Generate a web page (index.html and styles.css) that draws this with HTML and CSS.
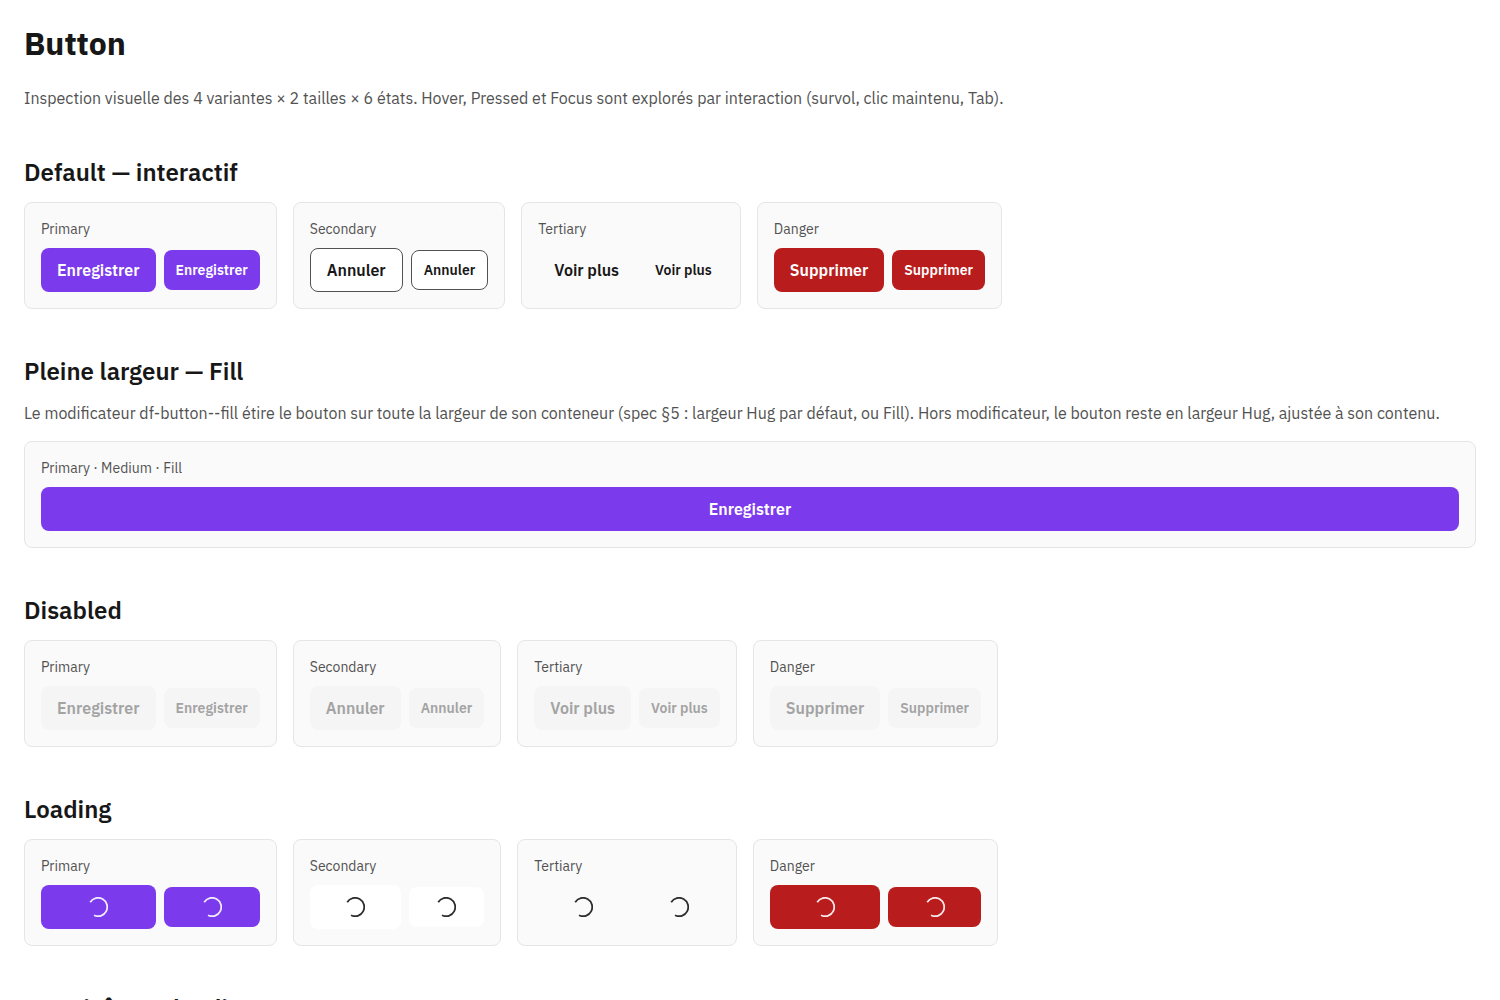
FILE: index.html
```html
<!DOCTYPE html>
<html lang="fr">
<head>
    <meta charset="UTF-8">
    <meta name="viewport" content="width=device-width, initial-scale=1.0">
    <title>Button</title>
    <link rel="stylesheet" href="styles.css">
</head>
<body>
    <!-- Spinner partagé par tous les boutons en chargement -->
    <svg class="sprite" aria-hidden="true">
        <symbol id="spinner" viewBox="0 0 20 20">
            <path d="M2.2 5.2A9.2 9.2 0 1 1 6 18.3" fill="none" stroke="currentColor" stroke-width="1.8"/>
        </symbol>
    </svg>

    <main class="page">
        <header class="intro">
            <h1>Button</h1>
            <p>Inspection visuelle des 4 variantes × 2 tailles × 6 états. Hover, Pressed et Focus sont explorés par interaction (survol, clic maintenu, Tab).</p>
        </header>

        <section class="section">
            <h2>Default — interactif</h2>
            <div class="row">
                <div class="card">
                    <span class="label">Primary</span>
                    <div class="buttons">
                        <button type="button" class="df-button df-button--primary">Enregistrer</button>
                        <button type="button" class="df-button df-button--primary df-button--small">Enregistrer</button>
                    </div>
                </div>
                <div class="card">
                    <span class="label">Secondary</span>
                    <div class="buttons">
                        <button type="button" class="df-button df-button--secondary">Annuler</button>
                        <button type="button" class="df-button df-button--secondary df-button--small">Annuler</button>
                    </div>
                </div>
                <div class="card">
                    <span class="label">Tertiary</span>
                    <div class="buttons">
                        <button type="button" class="df-button df-button--tertiary">Voir plus</button>
                        <button type="button" class="df-button df-button--tertiary df-button--small">Voir plus</button>
                    </div>
                </div>
                <div class="card">
                    <span class="label">Danger</span>
                    <div class="buttons">
                        <button type="button" class="df-button df-button--danger">Supprimer</button>
                        <button type="button" class="df-button df-button--danger df-button--small">Supprimer</button>
                    </div>
                </div>
            </div>
        </section>

        <section class="section">
            <h2>Pleine largeur — Fill</h2>
            <p>Le modificateur df-button--fill étire le bouton sur toute la largeur de son conteneur (spec §5 : largeur Hug par défaut, ou Fill). Hors modificateur, le bouton reste en largeur Hug, ajustée à son contenu.</p>
            <div class="card">
                <span class="label">Primary · Medium · Fill</span>
                <button type="button" class="df-button df-button--primary df-button--fill">Enregistrer</button>
            </div>
        </section>

        <section class="section">
            <h2>Disabled</h2>
            <div class="row">
                <div class="card">
                    <span class="label">Primary</span>
                    <div class="buttons">
                        <button type="button" class="df-button df-button--primary" disabled>Enregistrer</button>
                        <button type="button" class="df-button df-button--primary df-button--small" disabled>Enregistrer</button>
                    </div>
                </div>
                <div class="card">
                    <span class="label">Secondary</span>
                    <div class="buttons">
                        <button type="button" class="df-button df-button--secondary" disabled>Annuler</button>
                        <button type="button" class="df-button df-button--secondary df-button--small" disabled>Annuler</button>
                    </div>
                </div>
                <div class="card">
                    <span class="label">Tertiary</span>
                    <div class="buttons">
                        <button type="button" class="df-button df-button--tertiary" disabled>Voir plus</button>
                        <button type="button" class="df-button df-button--tertiary df-button--small" disabled>Voir plus</button>
                    </div>
                </div>
                <div class="card">
                    <span class="label">Danger</span>
                    <div class="buttons">
                        <button type="button" class="df-button df-button--danger" disabled>Supprimer</button>
                        <button type="button" class="df-button df-button--danger df-button--small" disabled>Supprimer</button>
                    </div>
                </div>
            </div>
        </section>

        <section class="section">
            <h2>Loading</h2>
            <div class="row">
                <div class="card">
                    <span class="label">Primary</span>
                    <div class="buttons">
                        <button type="button" class="df-button df-button--primary df-button--loading" aria-busy="true" aria-label="Enregistrer"><span class="text">Enregistrer</span><svg class="spinner"><use href="#spinner"/></svg></button>
                        <button type="button" class="df-button df-button--primary df-button--small df-button--loading" aria-busy="true" aria-label="Enregistrer"><span class="text">Enregistrer</span><svg class="spinner"><use href="#spinner"/></svg></button>
                    </div>
                </div>
                <div class="card">
                    <span class="label">Secondary</span>
                    <div class="buttons">
                        <button type="button" class="df-button df-button--secondary df-button--loading" aria-busy="true" aria-label="Annuler"><span class="text">Annuler</span><svg class="spinner"><use href="#spinner"/></svg></button>
                        <button type="button" class="df-button df-button--secondary df-button--small df-button--loading" aria-busy="true" aria-label="Annuler"><span class="text">Annuler</span><svg class="spinner"><use href="#spinner"/></svg></button>
                    </div>
                </div>
                <div class="card">
                    <span class="label">Tertiary</span>
                    <div class="buttons">
                        <button type="button" class="df-button df-button--tertiary df-button--loading" aria-busy="true" aria-label="Voir plus"><span class="text">Voir plus</span><svg class="spinner"><use href="#spinner"/></svg></button>
                        <button type="button" class="df-button df-button--tertiary df-button--small df-button--loading" aria-busy="true" aria-label="Voir plus"><span class="text">Voir plus</span><svg class="spinner"><use href="#spinner"/></svg></button>
                    </div>
                </div>
                <div class="card">
                    <span class="label">Danger</span>
                    <div class="buttons">
                        <button type="button" class="df-button df-button--danger df-button--loading" aria-busy="true" aria-label="Supprimer"><span class="text">Supprimer</span><svg class="spinner"><use href="#spinner"/></svg></button>
                        <button type="button" class="df-button df-button--danger df-button--small df-button--loading" aria-busy="true" aria-label="Supprimer"><span class="text">Supprimer</span><svg class="spinner"><use href="#spinner"/></svg></button>
                    </div>
                </div>
            </div>
        </section>

        <section class="section">
            <h2>Avec icône — leading</h2>
        </section>
    </main>
</body>
</html>
```
FILE: styles.css
```css
* {
    box-sizing: border-box;
}
body {
    margin: 0;
    background: #fff;
    color: #171717;
    font-family: 'IBM Plex Sans', Roboto, sans-serif;
    font-size: 16px;
    line-height: 24px;
}
h1, h2, p {
    margin: 0;
}
h1 {
    font-size: 32px;
    font-weight: 700;
    line-height: 38px;
}
h2 {
    font-size: 24px;
    font-weight: 600;
    line-height: 28px;
}
p {
    color: #525252;
}
.sprite {
    display: none;
}
.page {
    display: flex;
    flex-direction: column;
    gap: 48px;
    padding: 24px;
}
.intro {
    display: flex;
    flex-direction: column;
    gap: 24px;
}
.section {
    display: flex;
    flex-direction: column;
    gap: 16px;
}
.row {
    display: flex;
    flex-wrap: wrap;
    gap: 16px;
}
.card {
    display: flex;
    flex-direction: column;
    gap: 8px;
    padding: 16px;
    border: 1px solid #e5e5e5;
    border-radius: 8px;
    background: #fafafa;
}
.label {
    color: #525252;
    font-size: 14px;
    line-height: 21px;
}
.buttons {
    display: flex;
    align-items: center;
    gap: 8px;
}

/* Bouton */
.df-button {
    position: relative;
    display: inline-flex;
    align-items: center;
    justify-content: center;
    min-height: 44px;
    padding: 0 16px;
    border: 0;
    border-radius: 8px;
    font: inherit;
    font-weight: 600;
    cursor: pointer;
}
.df-button--small {
    min-height: 40px;
    padding: 0 12px;
    font-size: 14px;
}
.df-button--primary {
    background: #7c3aed;
    color: #fff;
}
.df-button--primary:hover {
    background: #6d28d9;
}
.df-button--secondary {
    border: 1px solid #525252;
    background: #fff;
    color: #171717;
}
.df-button--tertiary {
    background: transparent;
    color: #171717;
}
.df-button--danger {
    background: #b91c1c;
    color: #fff;
}
.df-button--danger:hover {
    background: #991b1b;
}
.df-button:focus-visible {
    outline: 2px solid #7c3aed;
    outline-offset: 2px;
}
.df-button--fill {
    width: 100%;
}
.df-button:disabled {
    border: 0;
    background: #f5f5f5;
    color: #a3a3a3;
    cursor: not-allowed;
}
.df-button--loading {
    border: 0;
    cursor: progress;
}
.df-button--loading .text {
    visibility: hidden;
}
/* Le spinner recouvre le libellé masqué, qui garde la largeur du bouton */
.spinner {
    position: absolute;
    inset: 0;
    width: 20px;
    height: 20px;
    margin: auto;
    opacity: 0.9;
}
```
